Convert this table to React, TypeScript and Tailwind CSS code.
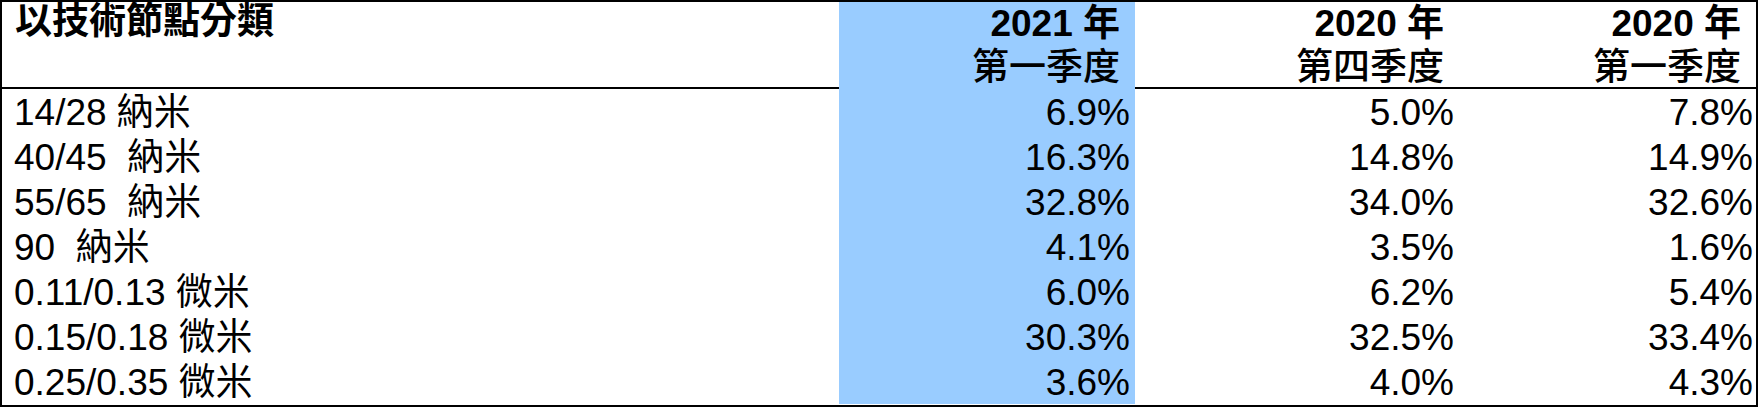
import React from 'react';

const rows = [
  { label: '14/28 納米', q1: '6.9%', q4: '5.0%', p1: '7.8%' },
  { label: '40/45  納米', q1: '16.3%', q4: '14.8%', p1: '14.9%' },
  { label: '55/65  納米', q1: '32.8%', q4: '34.0%', p1: '32.6%' },
  { label: '90  納米', q1: '4.1%', q4: '3.5%', p1: '1.6%' },
  { label: '0.11/0.13 微米', q1: '6.0%', q4: '6.2%', p1: '5.4%' },
  { label: '0.15/0.18 微米', q1: '30.3%', q4: '32.5%', p1: '33.4%' },
  { label: '0.25/0.35 微米', q1: '3.6%', q4: '4.0%', p1: '4.3%' },
];

const headers = [
  { year: '2021 年', quarter: '第一季度', blue: true },
  { year: '2020 年', quarter: '第四季度', blue: false },
  { year: '2020 年', quarter: '第一季度', blue: false },
];

const cols = 'grid grid-cols-[837px_296px_324px_1fr]';

export default function App() {
  return (
    <div
      className="w-[1758px] h-[407px] bg-white text-black border-2 border-black overflow-hidden"
      style={{ fontFamily: '"Liberation Sans", Arial, "Noto Sans CJK TC", sans-serif' }}
    >
      {/* header */}
      <div className={`${cols} h-[87px] border-b-2 border-black`}>
        <div className="pl-[13px] pt-[1px] text-[37px] leading-[38px] font-bold">以技術節點分類</div>
        {headers.map((h, i) => (
          <div
            key={i}
            className={`flex flex-col items-end pr-[15px] text-[37px] font-bold leading-[44px] ${h.blue ? 'bg-[#99ccff]' : ''}`}
          >
            <span>{h.year}</span>
            <span className="font-medium">{h.quarter}</span>
          </div>
        ))}
      </div>

      {/* data rows */}
      {rows.map((r) => (
        <div key={r.label} className={`${cols} h-[45px] text-[37px] leading-[41px]`}>
          <div className="pl-[12px] pt-[3px] whitespace-pre">{r.label}</div>
          <div className="bg-[#99ccff] text-right pr-[5px] pt-[3px]">{r.q1}</div>
          <div className="text-right pr-[5px] pt-[3px]">{r.q4}</div>
          <div className="text-right pr-[3px] pt-[3px]">{r.p1}</div>
        </div>
      ))}
    </div>
  );
}
